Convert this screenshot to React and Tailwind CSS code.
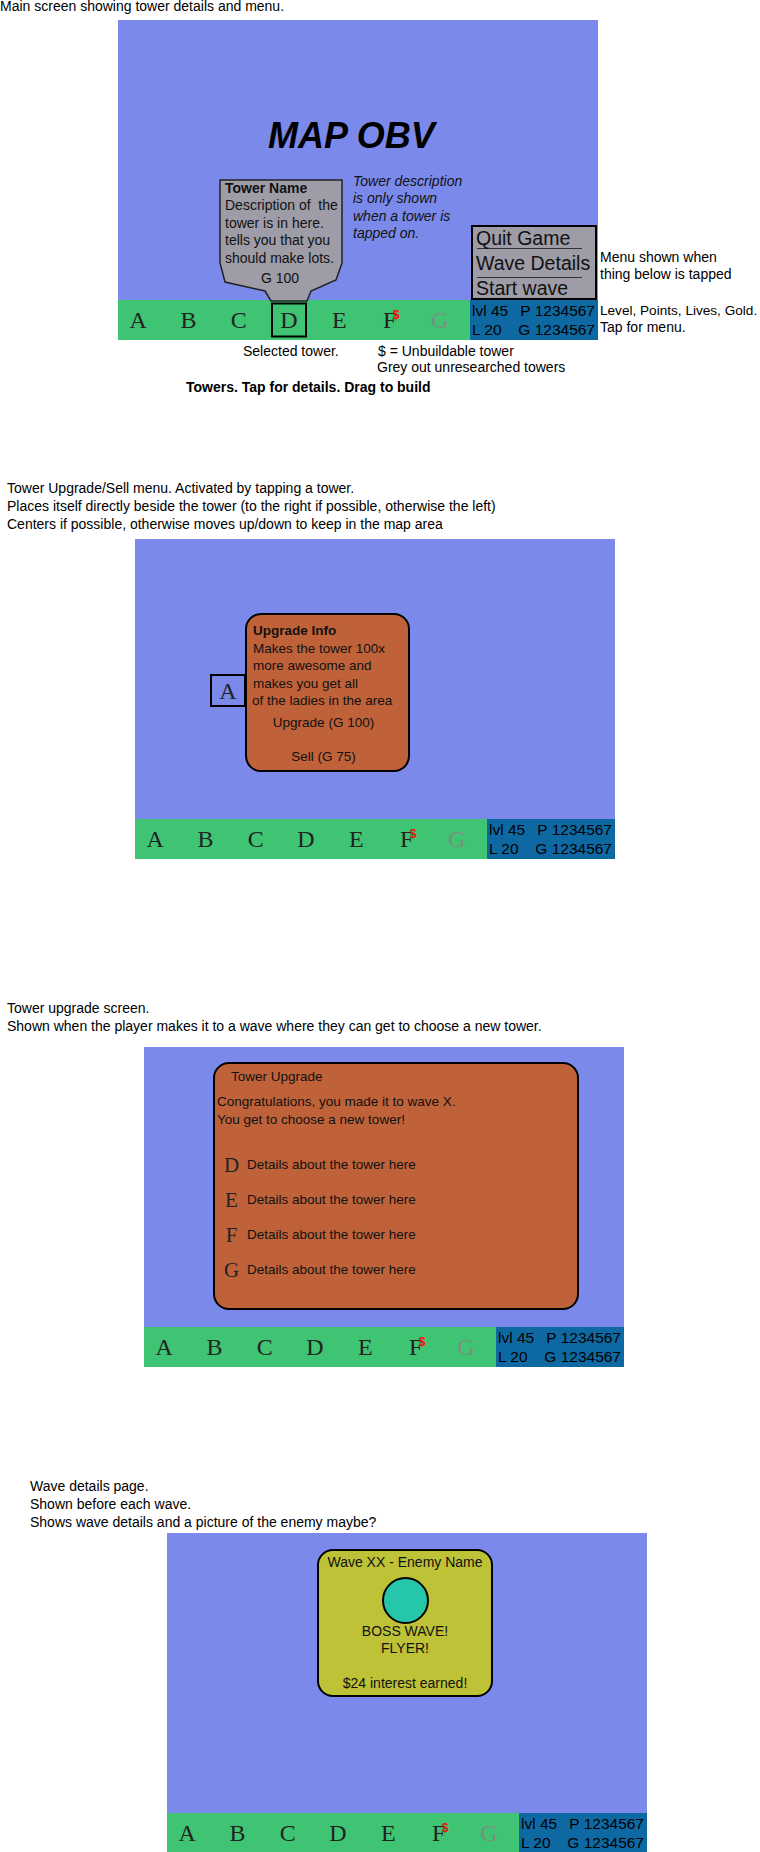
import React from 'react';

const LETTERS = ['A', 'B', 'C', 'D', 'E', 'F', 'G'];

// bottom bar: tower letters + level/points/lives/gold
function Bar({ selected }) {
  return (
    <div className="flex h-[40px]">
      <div className="flex w-[352px] items-center bg-[#3fc474]">
        <div className="-ml-[5px] flex font-['Liberation_Serif',serif] text-[24px] leading-none">
          {LETTERS.map(l => (
            <div key={l} className="relative flex w-[50.3px] justify-center">
              <span className={`relative inline-block ${l === 'G' ? 'text-[#7b8f7f]' : 'text-[#222]'}`}>{l}</span>
              {l === selected && (
                <span className="absolute left-1/2 top-1/2 h-[35px] w-[36px] -translate-x-1/2 -translate-y-1/2 border-2 border-black" />
              )}
              {l === 'F' && (
                <span className="absolute left-1/2 top-[1px] ml-[3px] font-['Liberation_Sans',sans-serif] text-[12px] font-bold leading-none text-[#ee1111]">$</span>
              )}
            </div>
          ))}
        </div>
      </div>
      <div className="flex w-[128px] flex-col justify-center bg-[#0e69a3] pl-[2px] pr-[3px] text-[15.5px] leading-[19px] text-black">
        <div className="flex justify-between"><span>lvl 45</span><span>P 1234567</span></div>
        <div className="flex justify-between"><span>L 20</span><span>G 1234567</span></div>
      </div>
    </div>
  );
}

function Panel({ children, selected }) {
  return (
    <div className="w-[480px] shrink-0">
      <div className="relative h-[280px] bg-[#7b8aea]">{children}</div>
      <Bar selected={selected} />
    </div>
  );
}

export default function App() {
  return (
    <div className="min-h-[1852px] w-[760px] overflow-hidden bg-white font-['Liberation_Sans',Arial,sans-serif] text-[14px] text-black">
      {/* main screen */}
      <div className="leading-[12px]">Main screen showing tower details and menu.</div>
      <div className="mt-[8px] flex items-start">
        <div className="ml-[118px] relative">
          <Panel selected="D">
            <div className="pl-[150px] pt-[98px] text-[36px] font-bold italic leading-none">MAP OBV</div>

            <div className="absolute left-[101px] top-[159px] z-10 h-[123px] w-[124px]">
              <svg className="absolute inset-0" width="124" height="123" viewBox="0 0 124 123">
                <polygon
                  points="1,1 123,1 123,84 117,101 92,112 88,122 52,122 46,112 6,103 1,84"
                  fill="#9d9ca7"
                  stroke="#222"
                  strokeWidth="1.5"
                />
              </svg>
              <div className="relative pl-[6px] pt-[1px] text-[14px] leading-[17.4px] text-[#111]">
                <div className="font-bold">Tower Name</div>
                <div className="whitespace-pre">Description of  the</div>
                <div>tower is in here.</div>
                <div>tells you that you</div>
                <div>should make lots.</div>
                <div className="mt-[3px] pr-[8px] text-center">G 100</div>
              </div>
            </div>

            <div className="absolute left-[235px] top-[153px] text-[14px] italic leading-[17.4px] text-[#111]">
              <div>Tower description</div>
              <div>is only shown</div>
              <div>when a tower is</div>
              <div>tapped on.</div>
            </div>

            <div className="absolute left-[353px] top-[205px] h-[75px] w-[126px] overflow-hidden border-2 border-black bg-[#9d9ca7] text-[19.5px] leading-[20px] text-[#111] whitespace-nowrap">
              <div className="flex h-[21px] items-center pl-[3px]">Quit Game</div>
              <div className="ml-[4px] h-px w-[105px] bg-[#333]" />
              <div className="flex h-[28px] items-center pl-[3px]">Wave Details</div>
              <div className="ml-[4px] h-px w-[105px] bg-[#333]" />
              <div className="flex h-[20px] items-center pl-[3px]">Start wave</div>
            </div>
          </Panel>
        </div>
        <div className="ml-[2px] pt-[229px] leading-[17px] whitespace-nowrap">
          <div>Menu shown when</div>
          <div>thing below is tapped</div>
          <div className="mt-[19px] text-[13.6px]">Level, Points, Lives, Gold.</div>
          <div>Tap for menu.</div>
        </div>
      </div>
      <div className="mt-[3px] flex leading-[16px]">
        <span className="ml-[243px] w-[135px]">Selected tower.</span>
        <span>$ = Unbuildable tower</span>
      </div>
      <div className="pl-[377px] leading-[16px]">Grey out unresearched towers</div>
      <div className="mt-[4px] pl-[186px] font-bold leading-[16px]">Towers. Tap for details. Drag to build</div>

      {/* upgrade / sell menu */}
      <div className="mt-[84px] pl-[7px] leading-[18px]">
        <div>Tower Upgrade/Sell menu. Activated by tapping a tower.</div>
        <div>Places itself directly beside the tower (to the right if possible, otherwise the left)</div>
        <div>Centers if possible, otherwise moves up/down to keep in the map area</div>
      </div>
      <div className="ml-[135px] mt-[6px]">
        <Panel>
          <div className="absolute left-[75px] top-[135px] flex h-[33px] w-[36px] items-center justify-center border-2 border-black font-['Liberation_Serif',serif] text-[24px] leading-none text-[#222]">A</div>
          <div className="absolute left-[110px] top-[74px] h-[159px] w-[165px] rounded-[16px] border-2 border-black bg-[#bf6239] px-[6px] pt-[7px] text-[13.5px] leading-[17.5px] text-[#111]">
            <div className="font-bold">Upgrade Info</div>
            <div>Makes the tower 100x</div>
            <div>more awesome and</div>
            <div>makes you get all</div>
            <div className="-ml-[1px] whitespace-nowrap">of the ladies in the area</div>
            <div className="mt-[4px] pr-[8px] text-center">Upgrade (G 100)</div>
            <div className="mt-[17px] pr-[8px] text-center">Sell (G 75)</div>
          </div>
        </Panel>
      </div>

      {/* tower upgrade screen */}
      <div className="mt-[140px] pl-[7px] leading-[18px]">
        <div>Tower upgrade screen.</div>
        <div>Shown when the player makes it to a wave where they can get to choose a new tower.</div>
      </div>
      <div className="ml-[144px] mt-[12px]">
        <Panel>
          <div className="absolute left-[69px] top-[15px] h-[248px] w-[366px] rounded-[16px] border-2 border-black bg-[#bf6239] text-[13.5px] text-[#111]">
            <div className="pl-[16px] pt-[4px] leading-[17px]">Tower Upgrade</div>
            <div className="mt-[8px] pl-[2px] leading-[17.5px]">
              <div>Congratulations, you made it to wave X.</div>
              <div>You get to choose a new tower!</div>
            </div>
            <div className="mt-[20px] pl-[9px]">
              {['D', 'E', 'F', 'G'].map(l => (
                <div key={l} className="flex h-[35px] items-center">
                  <span className="w-[15px] text-center font-['Liberation_Serif',serif] text-[21px] leading-none text-[#222]">{l}</span>
                  <span className="ml-[8px]">Details about the tower here</span>
                </div>
              ))}
            </div>
          </div>
        </Panel>
      </div>

      {/* wave details */}
      <div className="mt-[110px] pl-[30px] leading-[18px]">
        <div>Wave details page.</div>
        <div>Shown before each wave.</div>
        <div>Shows wave details and a picture of the enemy maybe?</div>
      </div>
      <div className="ml-[167px] mt-[2px]">
        <Panel>
          <div className="absolute left-[150px] top-[16px] flex h-[148px] w-[176px] flex-col items-center rounded-[16px] border-2 border-black bg-[#bdc236] pt-[2.5px] text-[14px] leading-[17px] text-[#111]">
            <div>Wave XX - Enemy Name</div>
            <div className="mt-[6px] h-[47px] w-[47px] rounded-full border-2 border-black bg-[#26c6aa]" />
            <div className="-mt-[1px]">BOSS WAVE!</div>
            <div>FLYER!</div>
            <div className="mt-[18px]">$24 interest earned!</div>
          </div>
        </Panel>
      </div>
    </div>
  );
}
